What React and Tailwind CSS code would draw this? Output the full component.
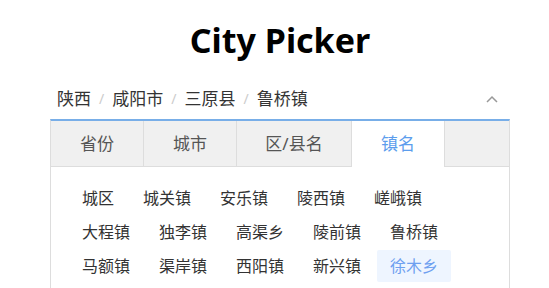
import { useState } from 'react';

const tabs = ['省份', '城市', '区/县名', '镇名'];
const tabWidths = ['w-[92px]', 'w-[93px]', 'w-[115px]', 'w-[93px]'];

const towns = [
  '城区', '城关镇', '安乐镇', '陵西镇', '嵯峨镇',
  '大程镇', '独李镇', '高渠乡', '陵前镇', '鲁桥镇',
  '马额镇', '渠岸镇', '西阳镇', '新兴镇', '徐木乡',
];

const path = ['陕西', '咸阳市', '三原县', '鲁桥镇'];

export default function App() {
  const [active, setActive] = useState(3);
  const [selected, setSelected] = useState('徐木乡');

  return (
    <div
      className="w-[549px] h-[288px] overflow-hidden bg-white"
      style={{ fontFamily: '"Noto Sans", "Noto Sans CJK SC", sans-serif' }}
    >
      <div className="ml-[50px] w-[460px]">
        {/* Title */}
        <h1 className="pt-[18px] h-[78px] text-center text-[34px] leading-[44px] font-bold text-black">
          City Picker
        </h1>

        {/* Input */}
        <div className="h-[41px] flex items-center justify-between pl-[7px] pr-[12px] text-[17px] text-[#333]">
          <div className="flex items-center">
            {path.map((p, i) => (
              <span key={p} className="flex items-center">
                {i > 0 && <span className="mx-[8px] text-[#ccc] text-[14px]">/</span>}
                {p}
              </span>
            ))}
          </div>
          <svg className="w-[12px] h-[8px]" viewBox="0 0 12 8" fill="none">
            <path d="M1 7L6 2l5 5" stroke="#999" strokeWidth="1.5" />
          </svg>
        </div>

        {/* Dropdown */}
        <div className="border-t-2 border-t-[#78aee8] border-x border-x-[#ddd] h-[200px] bg-white">
          <div className="flex h-[46px] bg-[#f0f0f0] border-b border-[#ddd]">
            {tabs.map((t, i) => (
              <button
                key={t}
                onClick={() => setActive(i)}
                className={
                  tabWidths[i] +
                  ' flex items-center justify-center text-[17px] ' +
                  (i > 0 ? 'border-l border-[#ddd] ' : '') +
                  (i === active
                    ? 'bg-white text-[#5c9ded] h-[46px] -mb-px'
                    : 'text-[#555]')
                }
              >
                {t}
              </button>
            ))}
            <div className="flex-1 border-l border-[#ddd]" />
          </div>

          <div className="pl-[18px] pr-[20px] pt-[15px] flex flex-wrap gap-x-[3px] gap-y-[2px] w-[440px]">
            {towns.map((town) => (
              <button
                key={town}
                onClick={() => setSelected(town)}
                className={
                  'h-[32px] px-[13px] text-[16px] leading-[32px] rounded-[2px] ' +
                  (town === selected ? 'bg-[#eef5ff] text-[#6ea0f0]' : 'text-[#333]')
                }
              >
                {town}
              </button>
            ))}
          </div>
        </div>
      </div>
    </div>
  );
}
